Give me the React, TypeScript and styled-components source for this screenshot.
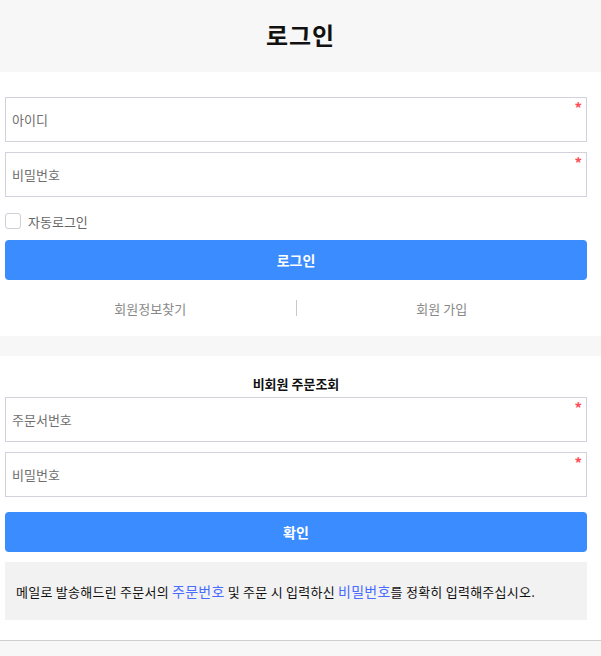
import React from "react";
import styled, { createGlobalStyle } from "styled-components";

const Global = createGlobalStyle`
  html, body { margin: 0; padding: 0; background: #f7f7f7; }
  body { font-family: "Noto Sans CJK KR", "Noto Sans", sans-serif; color: #222; }
  * { box-sizing: border-box; }
`;

const Page = styled.div`
  width: 601px;
  display: flex;
  flex-direction: column;
`;

const Header = styled.header`
  height: 72px;
  background: #f7f7f7;
  display: flex;
  align-items: center;
  justify-content: center;
  padding-bottom: 3px;
`;

const Title = styled.h1`
  margin: 0;
  font-size: 24px;
  font-weight: 700;
  color: #111;
  letter-spacing: 1px;
`;

const Section = styled.section<{ $top: number; $bottom: number }>`
  background: #fff;
  padding: ${(p) => p.$top}px 14px ${(p) => p.$bottom}px 5px;
  display: flex;
  flex-direction: column;
`;

const Spacer = styled.div`
  height: 20px;
  background: #f7f7f7;
`;

const Field = styled.div<{ $mb: number }>`
  position: relative;
  height: 45px;
  border: 1px solid #d3d1db;
  background: #fff;
  display: flex;
  align-items: center;
  padding: 0 6px;
  margin-bottom: ${(p) => p.$mb}px;
`;

const Input = styled.input`
  border: none;
  outline: none;
  background: transparent;
  width: 100%;
  font-family: inherit;
  font-size: 13px;
  color: #333;
  padding: 0;
  &::placeholder { color: #6f6f6f; }
`;

const Req = styled.span`
  position: absolute;
  top: 2px;
  right: 4px;
  color: #ff4d5a;
  font-size: 15px;
  font-weight: 700;
  line-height: 16px;
`;

const CheckRow = styled.label`
  display: flex;
  align-items: center;
  gap: 7px;
  height: 16px;
  margin: 16px 0 11px;
  font-size: 13px;
  color: #666;
`;

const Box = styled.span`
  width: 16px;
  height: 16px;
  border: 1px solid #cfcfd8;
  border-radius: 3px;
  background: #fff;
`;

const Button = styled.button`
  height: 40px;
  width: 100%;
  border: none;
  border-radius: 4px;
  background: #3b8cff;
  color: #fff;
  font-family: inherit;
  font-size: 14px;
  font-weight: 700;
  cursor: pointer;
`;

const Links = styled.div`
  display: flex;
  align-items: center;
  height: 16px;
  margin-top: 20px;
`;

const LinkItem = styled.a`
  flex: 1;
  text-align: center;
  font-size: 13px;
  color: #888;
  text-decoration: none;
`;

const Divider = styled.span`
  width: 1px;
  height: 16px;
  background: #c8c8c8;
`;

const SubTitle = styled.h2`
  margin: 0 0 5px;
  text-align: center;
  font-size: 13px;
  font-weight: 700;
  color: #111;
  line-height: 16px;
`;

const Notice = styled.div`
  margin-top: 10px;
  background: #f2f2f2;
  height: 58px;
  display: flex;
  align-items: center;
  padding: 0 11px;
  font-size: 13px;
  letter-spacing: 0.25px;
  color: #111;
  white-space: nowrap;
`;

const Em = styled.span`
  color: #4a6cff;
  font-size: 14px;
`;

const Footer = styled.div`
  border-top: 1px solid #cfcfcf;
  background: #f7f7f7;
  height: 16px;
  margin-top: 20px;
`;

const BottomWrap = styled.div`
  background: #fff;
`;

export default function App() {
  return (
    <Page>
      <Global />
      <Header>
        <Title>로그인</Title>
      </Header>
      <Section $top={25} $bottom={20}>
        <Field $mb={10}>
          <Input placeholder="아이디" />
          <Req>*</Req>
        </Field>
        <Field $mb={0}>
          <Input type="password" placeholder="비밀번호" />
          <Req>*</Req>
        </Field>
        <CheckRow>
          <Box />
          자동로그인
        </CheckRow>
        <Button>로그인</Button>
        <Links>
          <LinkItem href="#">회원정보찾기</LinkItem>
          <Divider />
          <LinkItem href="#">회원 가입</LinkItem>
        </Links>
      </Section>
      <Spacer />
      <BottomWrap>
        <Section $top={20} $bottom={0}>
          <SubTitle>비회원 주문조회</SubTitle>
          <Field $mb={10}>
            <Input placeholder="주문서번호" />
            <Req>*</Req>
          </Field>
          <Field $mb={15}>
            <Input type="password" placeholder="비밀번호" />
            <Req>*</Req>
          </Field>
          <Button>확인</Button>
          <Notice>
            메일로 발송해드린 주문서의&nbsp;<Em>주문번호</Em>&nbsp;및 주문 시 입력하신&nbsp;
            <Em>비밀번호</Em>를 정확히 입력해주십시오.
          </Notice>
        </Section>
        <Footer />
      </BottomWrap>
    </Page>
  );
}
